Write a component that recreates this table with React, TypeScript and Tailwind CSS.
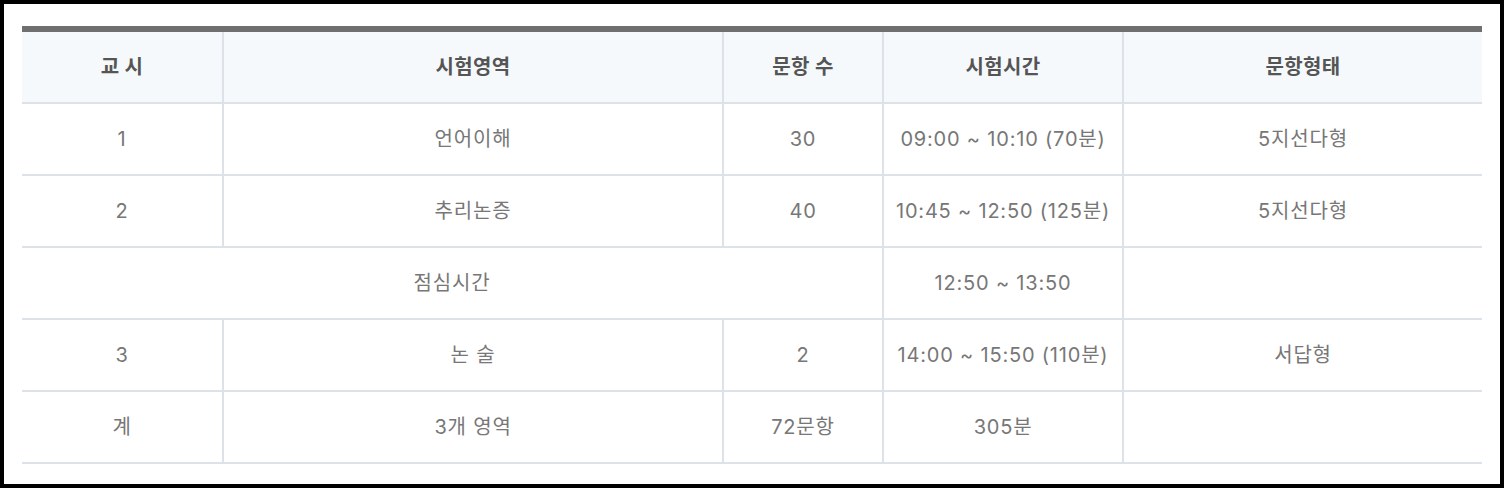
const font = { fontFamily: 'Inter, "Noto Sans CJK KR", "Noto Sans", sans-serif' };

type Row = { cells: string[]; lunch?: boolean };

const header = ['교 시', '시험영역', '문항 수', '시험시간', '문항형태'];

const rows: Row[] = [
  { cells: ['1', '언어이해', '30', '09:00 ~ 10:10 (70분)', '5지선다형'] },
  { cells: ['2', '추리논증', '40', '10:45 ~ 12:50 (125분)', '5지선다형'] },
  { cells: ['점심시간', '12:50 ~ 13:50', ''], lunch: true },
  { cells: ['3', '논 술', '2', '14:00 ~ 15:50 (110분)', '서답형'] },
  { cells: ['계', '3개 영역', '72문항', '305분', ''] },
];

function Cell({ children, first, className = '' }: { children?: React.ReactNode; first?: boolean; className?: string }) {
  return (
    <div
      className={`flex h-[72px] items-center justify-center border-b-2 border-[#dce2e8] ${first ? '' : 'border-l-2'} ${className}`}
    >
      {children}
    </div>
  );
}

export default function App() {
  return (
    <div className="h-[488px] w-[1504px] border-4 border-black bg-white px-[18px] pt-[22px]" style={font}>
      <div className="border-t-[6px] border-[#6f6f6f]">
        <div className="grid grid-cols-[200px_500px_160px_240px_360px] text-[20px] leading-none">
          {header.map((h, i) => (
            <Cell key={h} first={i === 0} className="bg-[#f6f9fc] font-bold tracking-[0.02em] text-[#555]">
              {h}
            </Cell>
          ))}
          {rows.map((row, r) =>
            row.lunch ? (
              <div key={r} className="contents tracking-[0.04em] text-[#777]">
                <Cell first className="col-span-3">{row.cells[0]}</Cell>
                <Cell>{row.cells[1]}</Cell>
                <Cell>{row.cells[2]}</Cell>
              </div>
            ) : (
              <div key={r} className="contents tracking-[0.04em] text-[#777]">
                {row.cells.map((c, i) => (
                  <Cell key={i} first={i === 0}>{c}</Cell>
                ))}
              </div>
            )
          )}
        </div>
      </div>
    </div>
  );
}
